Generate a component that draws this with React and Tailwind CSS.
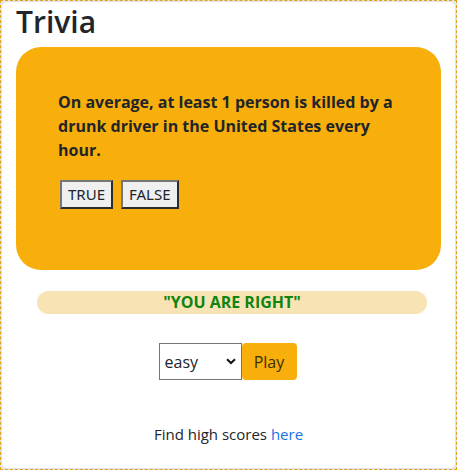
import React from 'react';

export default function App() {
  return (
    <div className="w-[457px] h-[470px] overflow-hidden border border-dashed border-[#e0a21a] bg-[#e6e6e6]">
      <div className="h-full bg-white rounded-md border border-[#e2e2e2] font-['Open_Sans',sans-serif] text-[#212529]">
        {/* Title */}
        <h1 className="px-[14px] pt-[1px] text-[30px] leading-[38px] font-semibold">Trivia</h1>

        {/* Question card */}
        <div className="mx-[14px] mt-[6px] h-[223px] rounded-[25px] bg-[#f8af0c] pl-[42px] pr-[40px] pt-[43px]">
          <p className="text-[16px] font-bold leading-[24px]">
            On average, at least 1 person is killed by a drunk driver in the United States every hour.
          </p>
          <div className="mt-[18px] flex gap-[8px] pl-[2px]">
            <button className="h-[29px] px-[6px] bg-[#efefef] border-2 border-t-[#767676] border-l-[#767676] border-r-[#2b2b2b] border-b-[#2b2b2b] text-[15px] font-['Noto_Sans',sans-serif] leading-none">TRUE</button>
            <button className="h-[29px] px-[6px] bg-[#efefef] border-2 border-t-[#767676] border-l-[#767676] border-r-[#2b2b2b] border-b-[#2b2b2b] text-[15px] font-['Noto_Sans',sans-serif] leading-none">FALSE</button>
          </div>
        </div>

        {/* Result */}
        <div className="ml-[35px] mr-[28px] mt-[21px] h-[23px] rounded-full bg-[#f8e3b5] text-center text-[16px] font-bold leading-[23px] text-[#0f850f]">
          "YOU ARE RIGHT"
        </div>

        {/* Difficulty + play */}
        <div className="mt-[29px] flex justify-center">
          <div className="flex -ml-[2px]">
            <div className="relative w-[83px] h-[37px] border border-[#767676] bg-white">
              <select className="appearance-none w-full h-full pl-[5px] text-[16px] bg-transparent outline-none">
                <option>easy</option>
                <option>medium</option>
                <option>hard</option>
              </select>
              <svg className="absolute right-[5px] top-[14px] pointer-events-none" width="10" height="7" viewBox="0 0 10 7">
                <path d="M1 1.2 L5 5 L9 1.2" fill="none" stroke="#111" strokeWidth="2" />
              </svg>
            </div>
            <button className="w-[55px] h-[37px] rounded-[4px] bg-[#f8af0c] text-[16px] text-[#3a3000]">Play</button>
          </div>
        </div>

        {/* Footer */}
        <p className="mt-[43px] text-center text-[15px]">
          Find high scores <a href="#" className="text-[#1a73e8]">here</a>
        </p>
      </div>
    </div>
  );
}
